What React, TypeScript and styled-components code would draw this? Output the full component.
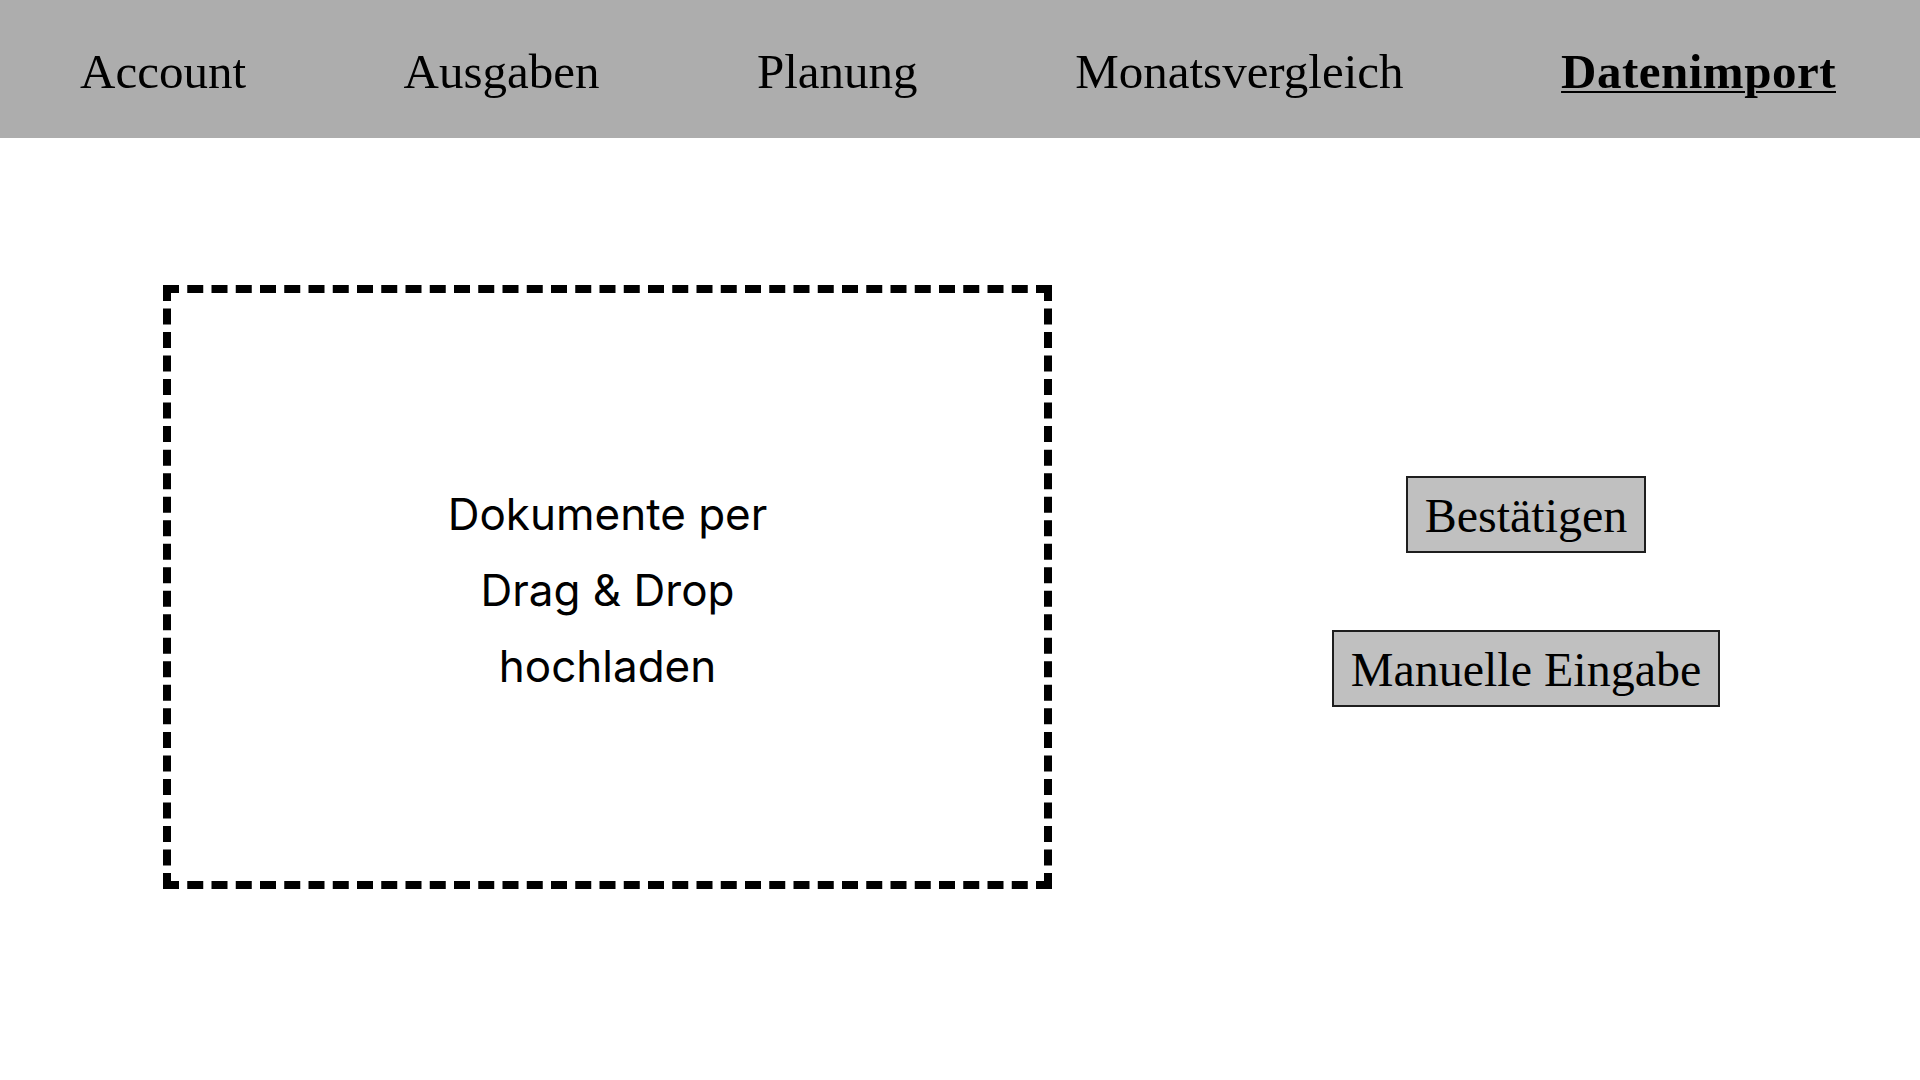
import React, { useState } from 'react';
import styled, { createGlobalStyle } from 'styled-components';

type Tab = 'Account' | 'Ausgaben' | 'Planung' | 'Monatsvergleich' | 'Datenimport';

const tabs: Tab[] = ['Account', 'Ausgaben', 'Planung', 'Monatsvergleich', 'Datenimport'];

const GlobalStyle = createGlobalStyle`
    html, body {
        margin: 0;
        padding: 0;
        background: #ffffff;
        color: #000000;
        font-family: "Liberation Serif", "Times New Roman", serif;
    }

    * {
        box-sizing: border-box;
    }
`

const Page = styled.div`
    width: 1920px;
    min-height: 1080px;
    background: #ffffff;
`

const NavBar = styled.nav`
    height: 138px;
    padding: 5px 84px 0 80px;
    display: flex;
    align-items: center;
    justify-content: space-between;
    background: #adadad;
`

const NavLink = styled.a<{ $active: boolean }>`
    font-family: "Liberation Serif", "Times New Roman", serif;
    font-size: 49px;
    line-height: 1.1;
    color: #000000;
    cursor: pointer;
    font-weight: ${(p) => (p.$active ? 700 : 400)};
    letter-spacing: ${(p) => (p.$active ? '0.5px' : '0')};
    text-decoration: ${(p) => (p.$active ? 'underline' : 'none')};
    text-decoration-thickness: 2px;
    text-underline-offset: 3px;
`

const Main = styled.main`
    padding: 147px 0 0 163px;
    display: grid;
    grid-template-columns: 889px 1fr;
    column-gap: 80px;
`

const DropZone = styled.div`
    width: 889px;
    height: 604px;
    padding-top: 6px;
    border: 8px dashed #000000;
    display: flex;
    align-items: center;
    justify-content: center;
    text-align: center;
    font-family: Inter, "Noto Sans", sans-serif;
    font-size: 44px;
    line-height: 76px;
    color: #000000;
`

const Actions = styled.div`
    display: flex;
    flex-direction: column;
    align-items: center;
    justify-content: center;
    gap: 77px;
    padding-top: 9px;
`

const ActionButton = styled.button`
    font-family: "Liberation Serif", "Times New Roman", serif;
    font-size: 48px;
    line-height: 53px;
    padding: 11px 17px 9px;
    background: #c0c0c0;
    border: 2px solid #1e1e1e;
    border-radius: 0;
    color: #000000;
    cursor: pointer;
`

const App: React.FC = () => {
    const [active, setActive] = useState<Tab>('Datenimport');

    return (
        <Page>
            <GlobalStyle />
            <NavBar>
                {tabs.map((tab) => (
                    <NavLink key={tab} $active={tab === active} onClick={() => setActive(tab)}>
                        {tab}
                    </NavLink>
                ))}
            </NavBar>
            <Main>
                <DropZone>
                    <div>
                        Dokumente per
                        <br />
                        Drag &amp; Drop
                        <br />
                        hochladen
                    </div>
                </DropZone>
                <Actions>
                    <ActionButton>Bestätigen</ActionButton>
                    <ActionButton>Manuelle Eingabe</ActionButton>
                </Actions>
            </Main>
        </Page>
    );
};

export default App;
